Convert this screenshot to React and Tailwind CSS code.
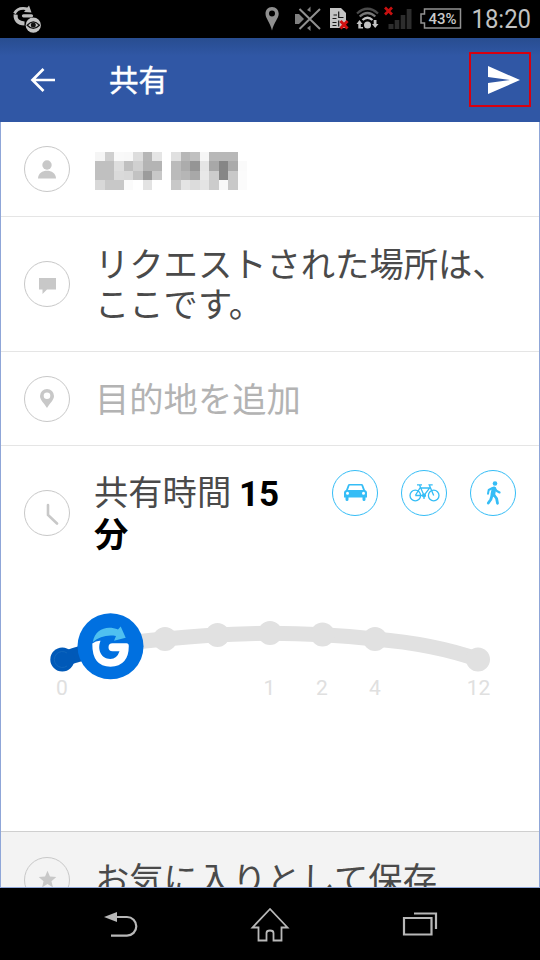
import React from "react";
import { MdStar } from "react-icons/md";

const MOSAIC = [
  "f5 cf f9 f8 dd b6 e5 ff e0 b7 c0 f6 b8 b8 b8 ff",
  "c0 c0 de c0 d0 b4 b4 ff bb ac 95 e5 a8 86 aa fa",
  "c0 c0 da d8 c2 9c c8 ff bb b6 a8 e8 cc 86 c8 fb",
  "d8 c8 c8 fb ff e3 ff ff c8 e4 dc e4 cc f8 c8 fb",
].map((row) => row.split(" "));

const STOPS = [
  [165, 639],
  [217.5, 635],
  [270, 633],
  [322.5, 634.5],
  [375, 639],
  [478, 659.5],
];

const LABELS = [
  [62, "0"],
  [269.5, "1"],
  [322, "2"],
  [375, "4"],
  [478.5, "12"],
];

function Ring({ children, className = "border-[#c8c8c8] text-[#c8c8c8]" }) {
  return (
    <div className={`flex size-[46px] shrink-0 items-center justify-center rounded-full border ${className}`}>
      {children}
    </div>
  );
}

function StatusBar() {
  return (
    <div className="h-[38px] shrink-0 bg-black">
      <svg width="540" height="38" viewBox="0 0 540 38">
        <g fill="none" stroke="#bdbdbd">
          <path d="M14.5 13.500 Q18 6.500 28 9" strokeWidth="2.800" />
          <path d="M15.600 14.500 Q15 23 24.500 23.400" strokeWidth="4" />
          <path d="M23.500 15.800 H31.500" strokeWidth="3.200" strokeLinecap="round" />
        </g>
        <path d="M29 5.500 L31.500 12.500 L24 12 Z" fill="#bdbdbd" />
        <circle cx="33.300" cy="25.200" r="7.600" fill="#c4c4c4" />
        <path d="M27.200 25.200 Q33.300 18.500 39.400 25.200 Q33.300 31.500 27.200 25.200 Z" fill="none" stroke="#111" strokeWidth="1.300" />
        <circle cx="33.300" cy="25.100" r="2.500" fill="#111" />

        <path fillRule="evenodd" fill="#8f8f8f" d="M272 7 C267.800 7 265.500 10 265.500 13.800 C265.500 18.500 270 22 272 30.500 C274 22 278.700 18.500 278.700 13.800 C278.700 10 276.200 7 272 7 Z M272 10.500 A3 3 0 1 1 272 16.500 A3 3 0 1 1 272 10.500 Z" />

        <g fill="#808080">
          <path d="M295 14 H299 L304 19 L299 24 H295 Z" />
          <path d="M310.500 6.500 V12 L307 10 Z M310.500 31 V25.500 L307 28 Z" />
        </g>
        <path d="M299.500 9 L320 29 M320 9 L299.500 29" stroke="#909090" strokeWidth="2" />

        <path d="M330 8 H341 L346 13 V28 H330 Z" fill="#c4c4c4" />
        <path d="M332.500 18.500 H336.500 M333.500 15 H337 M332.500 22.500 H336.500 M338.700 11.500 V17.500 H343.500 M338.700 20.500 V26.500 M332.500 25.500 H336.500" fill="none" stroke="#181818" strokeWidth="1.200" />
        <path d="M340.500 21 L347.500 28.500 M347.500 21 L340.500 28.500" stroke="#d01010" strokeWidth="3" />

        <g fill="none" strokeWidth="2.300">
          <path d="M357 13.500 Q367.500 4 378 13.500" stroke="#4a4a4a" />
          <path d="M359.700 16.500 Q367.500 9.500 375.300 16.500" stroke="#777" />
          <path d="M362.500 20 Q367.500 15.500 372.500 20" stroke="#c4c4c4" />
        </g>
        <circle cx="367.500" cy="25" r="3.500" fill="#c4c4c4" />
        <path d="M356.500 24 L359.500 20 L362.500 24 H360.800 V27 H363 V28.500 H358.300 V24 Z M375.500 20 H373.700 V24 H372 L375.200 28 L378.500 24 H376.500 V20 Z" fill="#c4c4c4" />

        <path d="M385 7.500 L392 14.500 M392 7.500 L385 14.500" stroke="#c81010" strokeWidth="2.700" />
        <path d="M388.500 24 H393.500 V29 H388.500 Z M394.700 20 H399.300 V29 H394.700 Z M400.700 15 H405.300 V29 H400.700 Z M406.700 9 H411.500 V29 H406.700 Z" fill="#2d2d2d" />

        <path d="M424.500 9 H460.500 V28 H424.500 V23 H421 V14 H424.500 Z" fill="none" stroke="#929292" strokeWidth="1.500" />
        <text x="442.500" y="24" textAnchor="middle" fontFamily="Roboto, sans-serif" fontSize="15.500" fontWeight="500" fill="#cacaca" textLength="28" lengthAdjust="spacingAndGlyphs">43%</text>
        <text x="471.500" y="27.700" fontFamily="Roboto, sans-serif" fontSize="25" fill="#c2c2c2" textLength="59.500" lengthAdjust="spacingAndGlyphs">18:20</text>
      </svg>
    </div>
  );
}

function Header() {
  return (
    <header className="flex h-[84px] shrink-0 items-center bg-[linear-gradient(#284d90,#3057a5_18px)] pr-[9px] pl-[30px] text-white">
      <svg width="26" height="26" viewBox="0 0 26 26" fill="none" stroke="currentColor" strokeWidth="2.700">
        <path d="M25 13 H3 M13.500 2 L2.500 13 L13.500 24" />
      </svg>
      <h1 className="mb-1 ml-[53px] flex-1 text-[29.5px] leading-[40px] font-normal [-webkit-text-stroke:0.5px_white]">共有</h1>
      <div className="mb-px flex h-[55px] w-[62px] items-center justify-center border-2 border-[#d8000f] pl-[7px]">
        <svg width="32" height="28" viewBox="0 0 32 28" fill="currentColor">
          <path d="M0 0 L32 14 L0 28 V17 L22 14 L0 11 Z" />
        </svg>
      </div>
    </header>
  );
}

function PersonIcon() {
  return (
    <svg width="18" height="19" viewBox="0 0 18 19" fill="currentColor">
      <circle cx="9" cy="5" r="4.700" />
      <path d="M0 18.500 C0 8 18 8 18 18.500 Z" />
    </svg>
  );
}

function PinIcon() {
  return (
    <svg width="14" height="19" viewBox="0 0 14 19" fill="currentColor">
      <path fillRule="evenodd" d="M7 0 A7 7 0 0 0 0 7 C0 11 4 14 7 19 C10 14 14 11 14 7 A7 7 0 0 0 7 0 Z M7 3.500 A3.300 3.300 0 1 1 7 10.100 A3.300 3.300 0 1 1 7 3.500 Z" />
    </svg>
  );
}

function CarIcon() {
  return (
    <svg width="23" height="17" viewBox="0 0 23 17" fill="currentColor">
      <path fillRule="evenodd" d="M5.500 0 H17.500 Q18.800 0 19.200 1.200 L21 6 Q23 6.500 23 8.500 V13.500 H21.500 V15.500 Q21.500 17 20 17 Q18.500 17 18.500 15.500 V13.500 H4.500 V15.500 Q4.500 17 3 17 Q1.500 17 1.500 15.500 V13.500 H0 V8.500 Q0 6.500 2 6 L3.800 1.200 Q4.200 0 5.500 0 Z M5.600 1.400 L4 6 H19 L17.400 1.400 Z M3.500 7.700 A1.500 1.500 0 1 0 3.500 10.700 A1.500 1.500 0 1 0 3.500 7.700 Z M19.500 7.700 A1.500 1.500 0 1 0 19.500 10.700 A1.500 1.500 0 1 0 19.500 7.700 Z" />
    </svg>
  );
}

function BikeIcon() {
  return (
    <svg width="31" height="19" viewBox="0 0 31 19" fill="none" stroke="currentColor" strokeWidth="1.300">
      <circle cx="6.300" cy="12.500" r="5.300" />
      <circle cx="24.700" cy="12.500" r="5.300" />
      <path d="M6.300 12.500 L11 5 H20.700 L15 12.500 L10.500 2 M24.700 12.500 L20.200 1.800 H23.700 M8 1.800 H13 M6.300 12.500 H14.500 M15 12.500 V16" />
      <circle cx="15" cy="12.500" r="1.400" fill="currentColor" />
    </svg>
  );
}

function WalkIcon() {
  return (
    <svg width="15" height="24" viewBox="0 0 15 24" fill="none" stroke="currentColor" strokeLinecap="round" strokeLinejoin="round">
      <circle cx="9" cy="2.500" r="2.300" fill="currentColor" stroke="none" />
      <path d="M8 7.800 L6.800 13.500" strokeWidth="4.600" />
      <path d="M6.500 7 L2.700 9 L2 12.700 M9 7.500 L10.800 10 L13.600 11.500" strokeWidth="2" />
      <path d="M6 14.500 L4.800 18.500 L2.300 22 M8 14 L10.600 17.500 L11.500 22.300" strokeWidth="2.800" />
    </svg>
  );
}

function Slider() {
  return (
    <svg className="-ml-px" width="540" height="110" viewBox="0 600 540 110">
      <path d="M62 659.500 Q110 643 165 639 Q218 633.500 270 633.300 Q323 633.500 375 639 Q434 644 478 659.500" fill="none" stroke="#e1e1e1" strokeWidth="15" />
      {STOPS.map(([x, y]) => (
        <circle key={x} cx={x} cy={y} r="12" fill="#e1e1e1" />
      ))}
      <path d="M62 659.500 Q86 651 110 647" fill="none" stroke="#0059b8" strokeWidth="15" />
      <circle cx="62.300" cy="659.500" r="12" fill="#0059b8" />
      <path d="M67 653 A8 8 0 1 0 67 666" fill="none" stroke="#1469be" strokeWidth="0.800" />
      <circle cx="110.500" cy="646.300" r="33" fill="#0070e0" />
      <path d="M92.300 643.500 Q92 666.700 110.500 666.700 Q128.800 666 128.800 646 Q128.800 643.300 126.500 643.300 H112.500 A4 4 0 0 0 112.500 651.300 H119.500 Q117 659 110.300 659 C101 659 97 649.500 100.500 640.800 Q96 640.500 92.300 643.500 Z" fill="white" />
      <path d="M92.800 642 C95 629 107 625 118 629.500 L120.700 626.500 L125.700 637.700 L114 640.800 L116 636 C107 634.500 99 636.800 92.800 642 Z" fill="#4fc0f0" />
      {LABELS.map(([x, label]) => (
        <text key={label} x={x} y="695" textAnchor="middle" fontFamily="Roboto, sans-serif" fontSize="21" fill="#e0e0e0">{label}</text>
      ))}
    </svg>
  );
}

function NavBar() {
  return (
    <nav className="h-[72px] shrink-0 bg-black">
      <svg width="540" height="72" viewBox="0 888 540 72" fill="none" stroke="#b8b8b8" strokeWidth="2.200">
        <path d="M116 917 H127 A9.300 9.300 0 0 1 127 935.600 H111" />
        <path d="M104 917 L117 912 V922 Z" fill="#b8b8b8" stroke="none" />
        <path d="M270 909 L252.500 927.500 H258.500 V940.500 H266.500 V933 Q266.500 930.500 270 930.500 Q273.500 930.500 273.500 933 V940.500 H281.500 V927.500 H287.500 Z" strokeWidth="1.800" />
        <path d="M404 918 H431.500 V934.500 H404 Z M414 913.500 H436 V929" />
      </svg>
    </nav>
  );
}

export default function App() {
  return (
    <div className="flex h-[960px] w-[540px] flex-col overflow-hidden bg-white font-['Noto_Sans_CJK_JP',sans-serif]">
      <StatusBar />
      <Header />
      <main className="h-[766px] min-h-0 flex-1 overflow-hidden border-x border-b border-[#8fa6d8] text-[34.3px] leading-[40px] text-[#4a4a4a]">
        <section className="flex h-[95px] items-center gap-[25px] border-b border-[#e5e5e5] pl-[23px]">
          <Ring><PersonIcon /></Ring>
          <div className="mt-[3px] grid w-[152px] grid-cols-16">
            {MOSAIC.flatMap((row, r) =>
              row.map((v, c) => (
                <div key={`${r}-${c}`} className="h-[9.5px]" style={{ backgroundColor: `#${v}${v}${v}` }} />
              ))
            )}
          </div>
        </section>
        <section className="flex h-[135px] items-center gap-[25px] border-b border-[#e5e5e5] pl-[23px]">
          <Ring>
            <svg className="mt-1" width="17" height="16" viewBox="0 0 17 16" fill="currentColor">
              <path d="M0 0 H17 V11.500 H8 L3.500 16 V11.500 H0 Z" />
            </svg>
          </Ring>
          <p className="mb-1 whitespace-nowrap">リクエストされた場所は、<br />ここです。</p>
        </section>
        <section className="flex h-[94px] items-center gap-[25px] border-b border-[#e5e5e5] pl-[23px]">
          <Ring><PinIcon /></Ring>
          <p className="mb-[3px] text-[#b3b3b3]">目的地を追加</p>
        </section>
        <section className="flex h-[386px] flex-col border-b border-[#cfcfcf]">
          <div className="flex h-[134px] items-center pl-[23px]">
            <Ring>
              <svg className="mt-px ml-2.5" width="13" height="22" viewBox="0 0 13 22" fill="none" stroke="currentColor" strokeWidth="2.600" strokeLinecap="round">
                <path d="M2 2 V12 L11 20.500" />
              </svg>
            </Ring>
            <p className="mb-1 ml-[24px] w-[238px] whitespace-nowrap">
              共有時間 <b className="align-[-1px] font-['Roboto'] text-[35px] leading-none text-black">15</b><br />
              <b className="text-black">分</b>
            </p>
            <div className="-mt-[41px] flex gap-[23px]">
              <Ring className="border-[#35bdf6] text-[#35bdf6]"><CarIcon /></Ring>
              <Ring className="border-[#35bdf6] text-[#35bdf6]"><BikeIcon /></Ring>
              <Ring className="border-[#35bdf6] text-[#35bdf6]"><WalkIcon /></Ring>
            </div>
          </div>
          <div className="pt-5"><Slider /></div>
        </section>
        <section className="flex h-[95px] items-center gap-[25px] bg-[#f3f3f3] pl-[23px]">
          <Ring><MdStar size={21} /></Ring>
          <p className="mb-[5px] whitespace-nowrap">お気に入りとして保存</p>
        </section>
      </main>
      <NavBar />
    </div>
  );
}
